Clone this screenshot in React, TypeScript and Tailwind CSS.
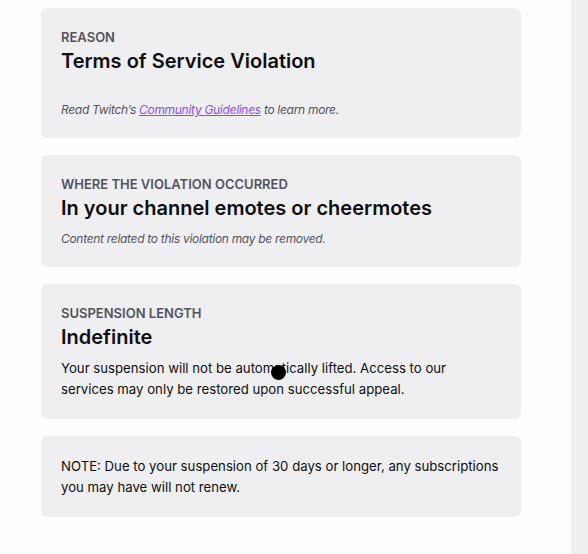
import type { ReactNode } from "react";

interface CardProps {
  label: string;
  title: string;
  gap?: string;
  children: ReactNode;
}

function InfoCard({ label, title, gap = "mt-[9px]", children }: CardProps) {
  return (
    <div className="bg-[#efeff1] rounded-md px-5 pt-5 pb-[19px]">
      <p className="text-[13px] leading-[19px] font-semibold uppercase text-[#53535f]">{label}</p>
      <h2 className="mt-[2px] text-[20px] leading-6 font-semibold text-[#0e0e10]">{title}</h2>
      <div className={gap}>{children}</div>
    </div>
  );
}

export default function App() {
  return (
    <div
      className="relative flex w-[588px] h-[554px] bg-[#fdfdfd] overflow-hidden"
      style={{ fontFamily: "Inter, 'Noto Sans', sans-serif" }}
    >
      <main className="flex-1 pl-[41px] pt-2">
        <div className="w-[480px] flex flex-col gap-[17px]">
          <InfoCard label="Reason" title="Terms of Service Violation" gap="mt-[27px]">
            <p className="text-[12px] leading-[19px] tracking-[-0.3px] italic text-[#53535f]">
              Read Twitch’s{" "}
              <a href="#" className="text-[#9147ff] underline">
                Community Guidelines
              </a>{" "}
              to learn more.
            </p>
          </InfoCard>

          <InfoCard label="Where the violation occurred" title="In your channel emotes or cheermotes">
            <p className="text-[12px] leading-[19px] tracking-[-0.3px] italic text-[#53535f]">
              Content related to this violation may be removed.
            </p>
          </InfoCard>

          <InfoCard label="Suspension length" title="Indefinite">
            <p className="text-[13.2px] leading-[21px] text-[#0e0e10]">
              Your suspension will not be automatically lifted. Access to our services may only be
              restored upon successful appeal.
            </p>
          </InfoCard>

          <div className="bg-[#efeff1] rounded-md px-5 pt-5 pb-[19px]">
            <p className="text-[13.2px] leading-[21px] text-[#0e0e10]">
              NOTE: Due to your suspension of 30 days or longer, any subscriptions you may have will
              not renew.
            </p>
          </div>
        </div>
      </main>

      <div className="w-[17px] bg-[#efefef]" />

      {/* cursor */}
      <div className="absolute left-[271px] top-[365px] w-[15px] h-[15px] rounded-full bg-black" />
    </div>
  );
}
